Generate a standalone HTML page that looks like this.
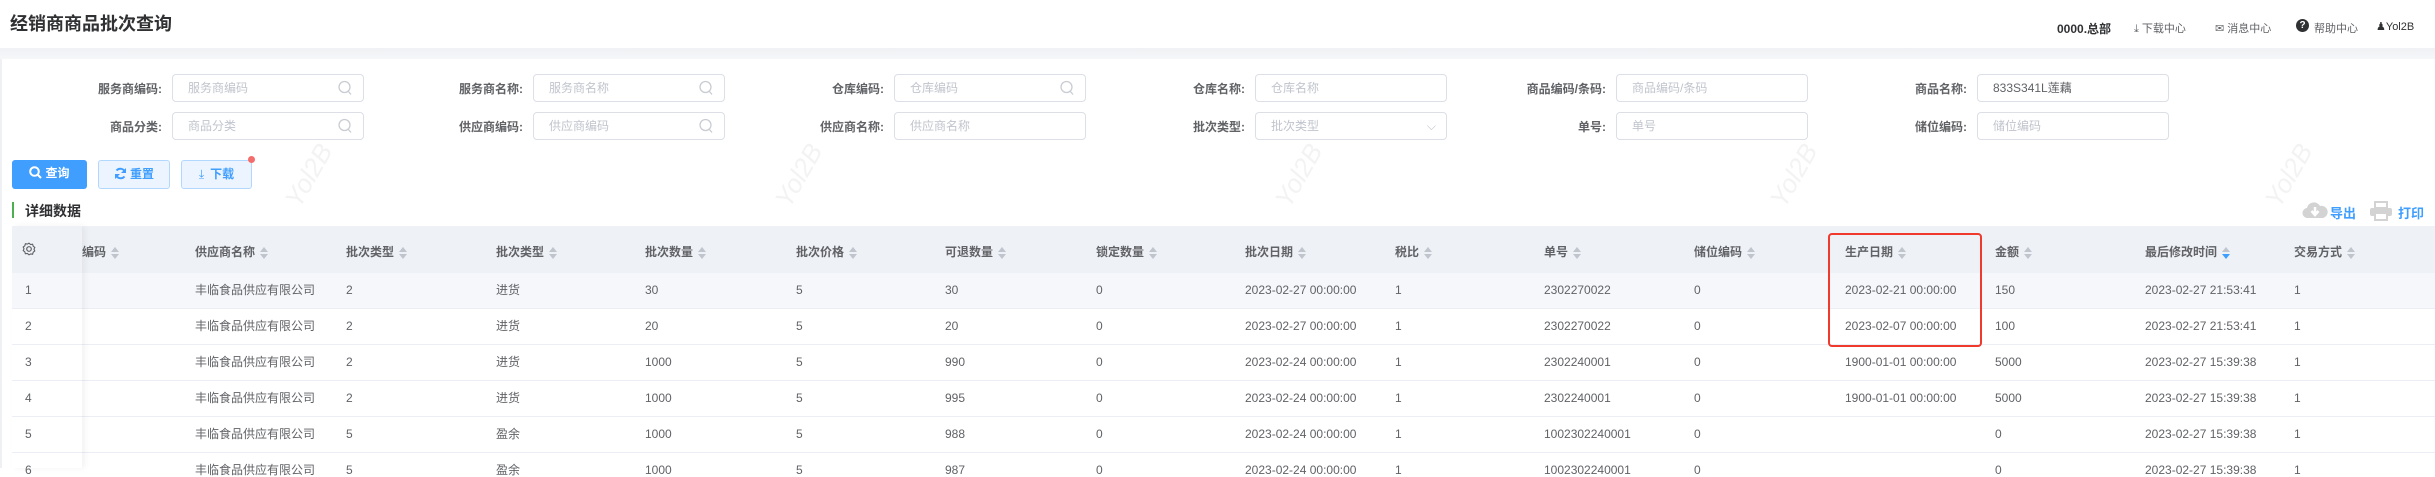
<!DOCTYPE html>
<html><head><meta charset="utf-8"><style>
*{margin:0;padding:0;box-sizing:border-box}
body{width:2435px;height:468px;overflow:hidden;background:#fff;font-family:"Liberation Sans","Noto Sans CJK SC",sans-serif;font-size:12px;color:#606266;position:relative}
.abs{position:absolute;white-space:nowrap}
.title{left:10px;top:10px;font-size:18px;font-weight:bold;color:#303133}
.band{left:0;top:48px;width:2435px;height:11px;background:linear-gradient(#f0f1f4,#f6f7f9)}
.leftb{left:0;top:59px;width:2px;height:409px;background:#eef0f4}
.lbl{font-weight:bold;color:#606266;text-align:right;width:120px}
.inp{height:28px;width:192px;border:1px solid #dcdfe6;border-radius:4px;color:#c0c4cc;padding-left:15px;line-height:26px}
.btn{height:29px;border-radius:3px;line-height:27px;text-align:center;font-weight:bold;font-size:12px}
.th{top:226px;height:47px;background:#eef1f6;left:12px;width:2423px}
.h{top:243px;font-weight:bold;color:#606266}
.s{display:inline-block;vertical-align:middle;margin-left:5px;width:8px;height:12px;position:relative}
.s:before{content:"";position:absolute;left:0;top:0;border:4px solid transparent;border-bottom:5px solid #c0c4cc;border-top:0}
.s:after{content:"";position:absolute;left:0;top:7px;border:4px solid transparent;border-top:5px solid #c0c4cc;border-bottom:0}
.s.d:after{border-top-color:#409eff}
.row{left:12px;width:2423px;height:36px;border-bottom:1px solid #ebeef5}
.c{color:#606266}
.wm{color:#f3f3f3;font-size:26px;transform:rotate(-60deg);font-style:italic}
</style></head><body>
<div class="abs title">经销商商品批次查询</div>
<div class="abs" style="left:2057px;top:20px;font-weight:bold;color:#303133">0000.总部</div>
<div class="abs" style="left:2134px;top:20px;color:#606266;font-size:11px">⤓ 下载中心</div>
<div class="abs" style="left:2215px;top:20px;color:#606266;font-size:11px">✉ 消息中心</div>
<div class="abs" style="left:2296px;top:19px;width:13px;height:13px;border-radius:50%;background:#303133;color:#fff;font-size:10px;text-align:center;line-height:13px;font-weight:bold">?</div>
<div class="abs" style="left:2314px;top:20px;color:#606266;font-size:11px">帮助中心</div>
<div class="abs" style="left:2376px;top:20px;color:#303133;font-size:11px">♟Yol2B</div>
<div class="abs band"></div>
<div class="abs leftb"></div>

<!-- watermarks -->
<div class="abs wm" style="left:275px;top:160px">Yol2B</div>
<div class="abs wm" style="left:765px;top:160px">Yol2B</div>
<div class="abs wm" style="left:1265px;top:160px">Yol2B</div>
<div class="abs wm" style="left:1760px;top:160px">Yol2B</div>
<div class="abs wm" style="left:2255px;top:160px">Yol2B</div>

<!-- form -->
<div class="abs lbl" style="left:42px;top:80px">服务商编码:</div><div class="abs inp" style="left:172px;top:74px">服务商编码</div>
<div class="abs lbl" style="left:403px;top:80px">服务商名称:</div><div class="abs inp" style="left:533px;top:74px">服务商名称</div>
<div class="abs lbl" style="left:764px;top:80px">仓库编码:</div><div class="abs inp" style="left:894px;top:74px">仓库编码</div>
<div class="abs lbl" style="left:1125px;top:80px">仓库名称:</div><div class="abs inp" style="left:1255px;top:74px">仓库名称</div>
<div class="abs lbl" style="left:1486px;top:80px">商品编码/条码:</div><div class="abs inp" style="left:1616px;top:74px">商品编码/条码</div>
<div class="abs lbl" style="left:1847px;top:80px">商品名称:</div><div class="abs inp" style="left:1977px;top:74px;color:#606266">833S341L莲藕</div>
<div class="abs lbl" style="left:42px;top:118px">商品分类:</div><div class="abs inp" style="left:172px;top:112px">商品分类</div>
<div class="abs lbl" style="left:403px;top:118px">供应商编码:</div><div class="abs inp" style="left:533px;top:112px">供应商编码</div>
<div class="abs lbl" style="left:764px;top:118px">供应商名称:</div><div class="abs inp" style="left:894px;top:112px">供应商名称</div>
<div class="abs lbl" style="left:1125px;top:118px">批次类型:</div><div class="abs inp" style="left:1255px;top:112px">批次类型<span style="position:absolute;right:10px;top:0">⌵</span></div>
<div class="abs lbl" style="left:1486px;top:118px">单号:</div><div class="abs inp" style="left:1616px;top:112px">单号</div>
<div class="abs lbl" style="left:1847px;top:118px">储位编码:</div><div class="abs inp" style="left:1977px;top:112px">储位编码</div>
<svg class="abs" style="left:338px;top:80px" width="14" height="16"><circle cx="6.5" cy="7" r="5.5" fill="none" stroke="#c9ccd3" stroke-width="1.3"/><path d="M10 11l3 3.5" stroke="#c9ccd3" stroke-width="1.3"/></svg>
<svg class="abs" style="left:699px;top:80px" width="14" height="16"><circle cx="6.5" cy="7" r="5.5" fill="none" stroke="#c9ccd3" stroke-width="1.3"/><path d="M10 11l3 3.5" stroke="#c9ccd3" stroke-width="1.3"/></svg>
<svg class="abs" style="left:1060px;top:80px" width="14" height="16"><circle cx="6.5" cy="7" r="5.5" fill="none" stroke="#c9ccd3" stroke-width="1.3"/><path d="M10 11l3 3.5" stroke="#c9ccd3" stroke-width="1.3"/></svg>
<svg class="abs" style="left:338px;top:118px" width="14" height="16"><circle cx="6.5" cy="7" r="5.5" fill="none" stroke="#c9ccd3" stroke-width="1.3"/><path d="M10 11l3 3.5" stroke="#c9ccd3" stroke-width="1.3"/></svg>
<svg class="abs" style="left:699px;top:118px" width="14" height="16"><circle cx="6.5" cy="7" r="5.5" fill="none" stroke="#c9ccd3" stroke-width="1.3"/><path d="M10 11l3 3.5" stroke="#c9ccd3" stroke-width="1.3"/></svg>

<!-- buttons -->
<div class="abs btn" style="left:12px;top:160px;width:75px;background:#409eff;color:#fff">
<svg width="13" height="13" style="vertical-align:-2px;margin-right:3px"><circle cx="5.5" cy="5.5" r="4.3" fill="none" stroke="#fff" stroke-width="2"/><path d="M8.5 8.5l3.5 3.5" stroke="#fff" stroke-width="2"/></svg>查询</div>
<div class="abs btn" style="left:98px;top:160px;width:72px;background:#ecf5ff;border:1px solid #b3d8ff;color:#409eff">
<svg width="13" height="13" style="vertical-align:-2px;margin-right:3px"><path d="M11 5A5 5 0 0 0 2.5 3.5M2 8a5 5 0 0 0 8.5 1.5" fill="none" stroke="#409eff" stroke-width="2"/><path d="M12 1v5H7zM1 12V7h5z" fill="#409eff"/></svg>重置</div>
<div class="abs btn" style="left:181px;top:160px;width:71px;background:#ecf5ff;border:1px solid #b3d8ff;color:#409eff"><span style="font-weight:normal;margin-right:6px">⤓</span>下载</div>
<div class="abs" style="left:248px;top:156px;width:7px;height:7px;border-radius:50%;background:#f56c6c"></div>

<div class="abs" style="left:12px;top:202px;width:2px;height:16px;background:#4caf50"></div>
<div class="abs" style="left:25px;top:201px;font-size:14px;font-weight:bold;color:#303133">详细数据</div>
<svg class="abs" style="left:2302px;top:201px" width="26" height="18"><path d="M6 17a5 5 0 0 1-1-10 7 7 0 0 1 13-2 5 5 0 0 1 3 12z" fill="#d3d3d3"/><path d="M13 6v7M9.5 10l3.5 4 3.5-4" stroke="#fff" stroke-width="2.5" fill="none"/></svg>
<div class="abs" style="left:2330px;top:203px;font-size:13px;color:#409eff;font-weight:bold">导出</div>
<svg class="abs" style="left:2369px;top:201px" width="24" height="20"><rect x="6" y="1" width="12" height="6" fill="none" stroke="#d3d3d3" stroke-width="2"/><rect x="1" y="7" width="22" height="8" rx="2" fill="#d3d3d3"/><rect x="6" y="12" width="12" height="7" fill="#fff" stroke="#d3d3d3" stroke-width="2"/></svg>
<div class="abs" style="left:2398px;top:203px;font-size:13px;color:#409eff;font-weight:bold">打印</div>

<!-- table -->
<div class="abs th"></div>
<div class="abs row" style="top:273px;background:#f5f7fa"></div>
<div class="abs row" style="top:309px"></div>
<div class="abs row" style="top:345px"></div>
<div class="abs row" style="top:381px"></div>
<div class="abs row" style="top:417px"></div>
<div class="abs" style="left:12px;top:226px;width:70px;height:242px;box-shadow:3px 0 6px rgba(0,0,0,.05)"></div>
<svg class="abs" style="left:22px;top:242px" width="14" height="14"><circle cx="7" cy="7" r="2.3" fill="none" stroke="#606266" stroke-width="1.2"/><path d="M7 1.2l1.6 1.3 2-.3.6 2 1.6 1.2-.8 1.8.8 1.8-1.6 1.2-.6 2-2-.3L7 12.8l-1.6-1.3-2 .3-.6-2-1.6-1.2L2 6.8 1.2 5l1.6-1.2.6-2 2 .3z" fill="none" stroke="#606266" stroke-width="1.1"/></svg>
<div class="abs h" style="left:82px">编码<span class="s"></span></div>
<div class="abs h" style="left:195px">供应商名称<span class="s"></span></div>
<div class="abs h" style="left:346px">批次类型<span class="s"></span></div>
<div class="abs h" style="left:496px">批次类型<span class="s"></span></div>
<div class="abs h" style="left:645px">批次数量<span class="s"></span></div>
<div class="abs h" style="left:796px">批次价格<span class="s"></span></div>
<div class="abs h" style="left:945px">可退数量<span class="s"></span></div>
<div class="abs h" style="left:1096px">锁定数量<span class="s"></span></div>
<div class="abs h" style="left:1245px">批次日期<span class="s"></span></div>
<div class="abs h" style="left:1395px">税比<span class="s"></span></div>
<div class="abs h" style="left:1544px">单号<span class="s"></span></div>
<div class="abs h" style="left:1694px">储位编码<span class="s"></span></div>
<div class="abs h" style="left:1845px">生产日期<span class="s"></span></div>
<div class="abs h" style="left:1995px">金额<span class="s"></span></div>
<div class="abs h" style="left:2145px">最后修改时间<span class="s d"></span></div>
<div class="abs h" style="left:2294px">交易方式<span class="s"></span></div>

<div id="rows"></div>
<div class="abs" style="left:1828px;top:233px;width:154px;height:114px;border:2px solid #f03a2e;border-radius:4px"></div>
<script>
var cols=[25,195,346,496,645,796,945,1096,1245,1395,1544,1694,1845,1995,2145,2294];
var d=[
["1","丰临食品供应有限公司","2","进货","30","5","30","0","2023-02-27 00:00:00","1","2302270022","0","2023-02-21 00:00:00","150","2023-02-27 21:53:41","1"],
["2","丰临食品供应有限公司","2","进货","20","5","20","0","2023-02-27 00:00:00","1","2302270022","0","2023-02-07 00:00:00","100","2023-02-27 21:53:41","1"],
["3","丰临食品供应有限公司","2","进货","1000","5","990","0","2023-02-24 00:00:00","1","2302240001","0","1900-01-01 00:00:00","5000","2023-02-27 15:39:38","1"],
["4","丰临食品供应有限公司","2","进货","1000","5","995","0","2023-02-24 00:00:00","1","2302240001","0","1900-01-01 00:00:00","5000","2023-02-27 15:39:38","1"],
["5","丰临食品供应有限公司","5","盈余","1000","5","988","0","2023-02-24 00:00:00","1","1002302240001","0","","0","2023-02-27 15:39:38","1"],
["6","丰临食品供应有限公司","5","盈余","1000","5","987","0","2023-02-24 00:00:00","1","1002302240001","0","","0","2023-02-27 15:39:38","1"]];
var h="";d.forEach(function(r,i){r.forEach(function(v,j){h+='<div class="abs c" style="left:'+cols[j]+'px;top:'+(283+36*i)+'px;line-height:14px">'+v+'</div>';});});
document.getElementById("rows").innerHTML=h;
</script>
</body></html>
